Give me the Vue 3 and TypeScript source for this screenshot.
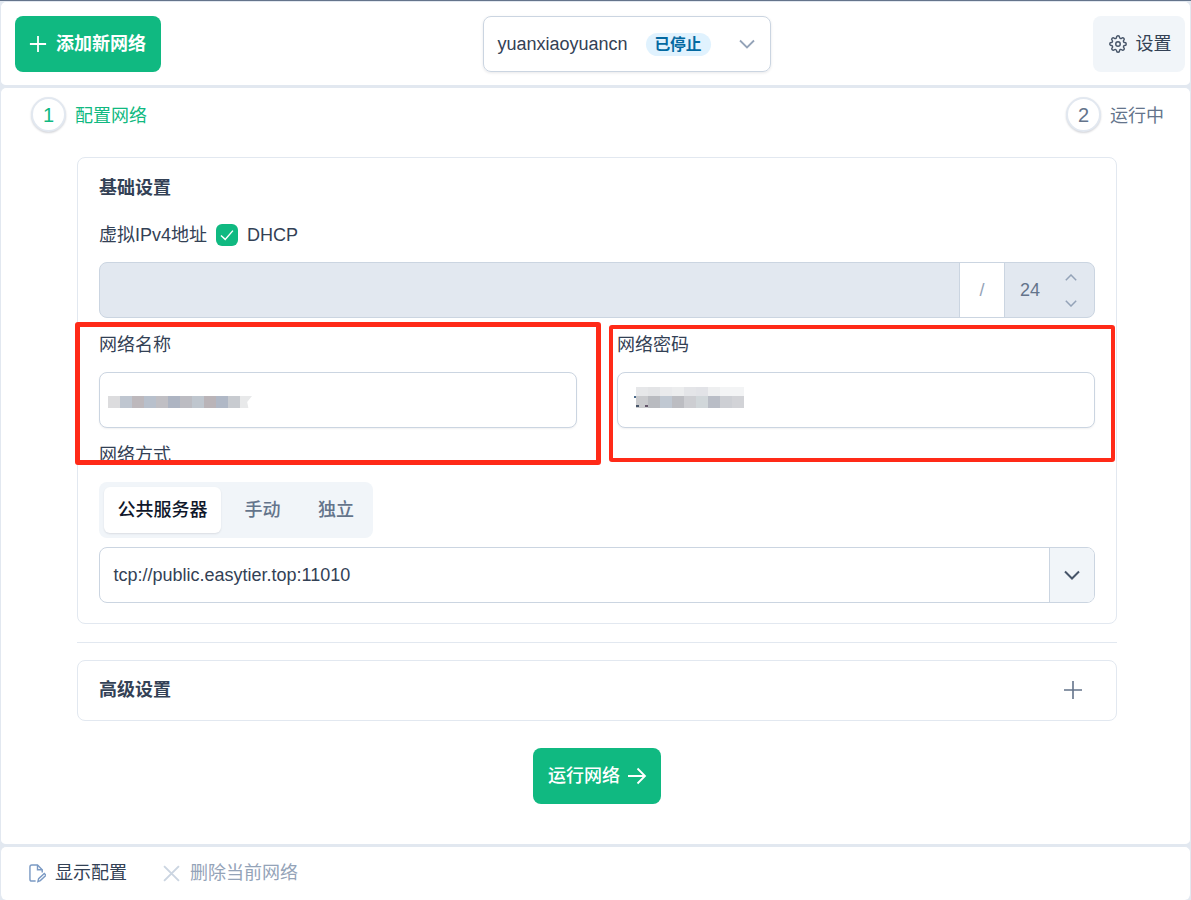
<script setup lang="ts">
const nameBlur: string[] = ['#dcdcde','#bfc6d0','#bdb8bc','#b8c0cc','#c0bfc4','#adb4c2','#bcbcc2','#bfc6ce','#bab4b8','#b0b8c6','#c8cbd0','#e8e9ea']
const pwTop: string[] = ['#e6e7e9','#e3e4e6','#e9eaec','#ecedee','#e4e5e8','#e2e3e7','#eeeff0','#f3f4f5','#f3f4f5']
const pwBottom: string[] = ['#c9cacd','#b9bbc0','#c0c8d2','#bcbdc2','#cdced2','#d1d7da','#b9bdc6','#cdcfd4','#d2d3d7']
</script>

<template>
  <div class="page">
    <header class="panel topbar">
      <button class="btn btn-green add">
        <svg class="ic20" viewBox="0 0 20 20"><path d="M10 1v18M1 10h18" /></svg>
        <span>添加新网络</span>
      </button>
      <div class="net-select">
        <span class="net-name">yuanxiaoyuancn</span>
        <span class="tag">已停止</span>
        <svg class="chev" viewBox="0 0 16 10"><path d="M1 1.500 8 8.500l7-7" /></svg>
      </div>
      <button class="settings">
        <svg class="gear" viewBox="0 0 24 24">
          <circle cx="12" cy="12" r="3" />
          <path d="M19.4 15a1.65 1.65 0 0 0 .33 1.82l.06.06a2 2 0 1 1-2.83 2.83l-.06-.06a1.65 1.65 0 0 0-1.82-.33 1.65 1.65 0 0 0-1 1.51V21a2 2 0 0 1-4 0v-.09A1.65 1.65 0 0 0 9 19.4a1.65 1.65 0 0 0-1.82.33l-.06.06a2 2 0 1 1-2.83-2.83l.06-.06a1.65 1.65 0 0 0 .33-1.82 1.65 1.65 0 0 0-1.51-1H3a2 2 0 0 1 0-4h.09A1.65 1.65 0 0 0 4.6 9a1.65 1.65 0 0 0-.33-1.82l-.06-.06a2 2 0 1 1 2.83-2.83l.06.06a1.65 1.65 0 0 0 1.82.33H9a1.65 1.65 0 0 0 1-1.51V3a2 2 0 0 1 4 0v.09a1.65 1.65 0 0 0 1 1.51 1.65 1.65 0 0 0 1.82-.33l.06-.06a2 2 0 1 1 2.83 2.83l-.06.06a1.65 1.65 0 0 0-.33 1.82V9a1.65 1.65 0 0 0 1.51 1H21a2 2 0 0 1 0 4h-.09a1.65 1.65 0 0 0-1.51 1z" />
        </svg>
        <span>设置</span>
      </button>
    </header>

    <main class="panel main">
      <div class="stepper">
        <div class="step">
          <span class="circle active">1</span>
          <span class="step-label active">配置网络</span>
        </div>
        <div class="step">
          <span class="circle">2</span>
          <span class="step-label">运行中</span>
        </div>
      </div>

      <div class="content">
        <section class="card basic">
          <h3 class="card-title">基础设置</h3>
          <div class="ip-row">
            <span>虚拟IPv4地址</span>
            <span class="check">
              <svg viewBox="0 0 14 14"><path d="M2.300 7.400 5.600 10.400l6-6.800" /></svg>
            </span>
            <span>DHCP</span>
          </div>
          <div class="ip-group">
            <div class="ip-main"></div>
            <div class="ip-slash">/</div>
            <div class="ip-mask">
              <span>24</span>
              <span class="spin">
                <svg viewBox="0 0 12 7"><path d="M.8 6.200 6 1l5.200 5.200" /></svg>
                <svg viewBox="0 0 12 7"><path d="M.8.8 6 6 11.200.8" /></svg>
              </span>
            </div>
          </div>
          <div class="two-col">
            <div class="field">
              <label>网络名称</label>
              <div class="input">
                <div class="blur blur-name">
                  <i v-for="(c, i) in nameBlur" :key="i" :style="{ background: c }"></i>
                </div>
              </div>
            </div>
            <div class="field">
              <label>网络密码</label>
              <div class="input">
                <div class="blur-pw">
                  <div class="blur pw-top"><i v-for="(c, i) in pwTop" :key="i" :style="{ background: c }"></i></div>
                  <div class="blur"><i v-for="(c, i) in pwBottom" :key="i" :style="{ background: c }"></i></div>
                </div>
              </div>
            </div>
          </div>
          <label class="mode-label">网络方式</label>
          <div class="segmented">
            <span class="seg on">公共服务器</span>
            <span class="seg">手动</span>
            <span class="seg">独立</span>
          </div>
          <div class="server">
            <span class="server-text">tcp://public.easytier.top:11010</span>
            <span class="server-drop">
              <svg viewBox="0 0 16 10"><path d="M1 1.500 8 8.500l7-7" /></svg>
            </span>
          </div>
        </section>

        <div class="divider"></div>

        <section class="card advanced">
          <h3 class="card-title">高级设置</h3>
          <svg class="adv-plus" viewBox="0 0 20 20"><path d="M10 1v18M1 10h18" /></svg>
        </section>

        <div class="run-wrap">
          <button class="btn btn-green run">
            <span>运行网络</span>
            <svg class="arrow" viewBox="0 0 20 18"><path d="M1 9h17M10.500 1.500 18 9l-7.500 7.500" /></svg>
          </button>
        </div>
      </div>
    </main>

    <footer class="panel footer">
      <span class="foot-item">
        <svg class="file" viewBox="0 0 18 20">
          <path d="M7 18H3a2 2 0 0 1-2-2V3a2 2 0 0 1 2-2h6l5 5v3" />
          <path d="M9 1v5h5" />
          <path d="M9.500 18.500l.7-3 6-5.500 1.800 2-6 5.500z" />
        </svg>
        <span>显示配置</span>
      </span>
      <span class="foot-item muted">
        <svg class="times" viewBox="0 0 16 16"><path d="M1 1l14 14M15 1 1 15" /></svg>
        <span>删除当前网络</span>
      </span>
    </footer>

    <div class="mark mark-a"></div>
    <div class="mark mark-b"></div>
  </div>
</template>

<style>
html, body { margin: 0; background: #fff; }
</style>

<style scoped>
* { box-sizing: border-box; }
.page {
  position: relative;
  width: 1191px;
  height: 900px;
  overflow: hidden;
  display: flex;
  flex-direction: column;
  background: #e2e8f0;
  border-top: 1px solid #64748b;
  font-family: "Liberation Sans", "Noto Sans CJK SC", sans-serif;
  font-size: 18px;
  line-height: 24px;
  color: #334155;
}
.panel {
  background: #fff;
  border: 1px solid #e2e8f0;
  border-radius: 6px;
}
.topbar {
  height: 86px;
  flex: none;
  padding: 14px 5px 0 14px;
  display: flex;
  align-items: flex-start;
  justify-content: space-between;
  border-bottom-width: 2px;
}
.btn {
  font: inherit;
  border: 0;
  display: flex;
  align-items: center;
  height: 56px;
  border-radius: 8px;
  color: #fff;
  background: #10b981;
}
.add {
  width: 146px;
  padding: 0 14px;
  gap: 9px;
  font-weight: 700;
}
.ic20 { width: 18px; height: 18px; flex: none; fill: none; stroke: #fff; stroke-width: 2; }
.net-select {
  width: 288px;
  height: 56px;
  margin-left: -1px;
  border: 1px solid #cbd5e1;
  border-radius: 8px;
  box-shadow: 0 1px 3px rgba(15, 23, 42, .1);
  display: flex;
  align-items: center;
  padding: 0 15px 0 14px;
}
.net-name { width: 130px; white-space: nowrap; }
.tag {
  margin-left: 18px;
  width: 65px;
  height: 23px;
  border-radius: 12px;
  background: #e0f2fe;
  color: #0369a1;
  font-size: 15.750px;
  font-weight: 700;
  line-height: 23px;
  text-align: center;
}
.chev { margin-left: auto; width: 16px; height: 10px; fill: none; stroke: #94a3b8; stroke-width: 1.800; }
.settings {
  font: inherit;
  color: #334155;
  border: 0;
  width: 92px;
  height: 56px;
  padding: 0 0 0 2px;
  border-radius: 8px;
  background: #f1f5f9;
  display: flex;
  align-items: center;
  justify-content: center;
  gap: 9px;
}
.gear { width: 18px; height: 18px; flex: none; fill: none; stroke: #475569; stroke-width: 1.900; }
.main {
  flex: none;
  height: 759px;
  border-bottom-width: 2px;
}
.stepper {
  display: flex;
  justify-content: space-between;
  padding: 9px 26px 0 30px;
  height: 69px;
}
.step { display: flex; align-items: flex-start; gap: 9px; }
.circle {
  width: 35px;
  height: 35px;
  border-radius: 50%;
  border: 2px solid #e2e8f0;
  box-shadow: 0 1px 2px rgba(15, 23, 42, .18);
  background: #fff;
  display: flex;
  align-items: center;
  justify-content: center;
  font-size: 20px;
  color: #64748b;
}
.circle.active { color: #10b981; }
.step-label { color: #64748b; line-height: 35px; padding-top: 2px; }
.step-label.active { color: #10b981; }
.content { padding: 0 73px 0 76px; }
.card {
  border: 1px solid #e2e8f0;
  border-radius: 8px;
  background: #fff;
}
.basic { height: 467px; padding: 18px 21px 0; }
.card-title {
  margin: 0;
  font-size: 18px;
  font-weight: 700;
  line-height: 24px;
  color: #334155;
}
.ip-row {
  margin-top: 23px;
  height: 24px;
  display: flex;
  align-items: center;
  gap: 9px;
}
.check {
  width: 22px;
  height: 22px;
  border-radius: 6px;
  background: #10b981;
  display: flex;
  align-items: center;
  justify-content: center;
}
.check svg { width: 18px; height: 18px; fill: none; stroke: #fff; stroke-width: 1.100; }
.ip-group {
  margin-top: 15px;
  height: 56px;
  display: flex;
  border: 1px solid #cbd5e1;
  border-radius: 8px;
  overflow: hidden;
  background: #e2e8f0;
}
.ip-main { flex: 1; }
.ip-slash {
  width: 46px;
  background: #fff;
  border-left: 1px solid #cbd5e1;
  border-right: 1px solid #cbd5e1;
  display: flex;
  align-items: center;
  justify-content: center;
  color: #94a3b8;
}
.ip-mask {
  width: 89px;
  display: flex;
  align-items: center;
  padding-left: 15px;
  color: #64748b;
}
.spin {
  margin-left: 25px;
  display: flex;
  flex-direction: column;
  gap: 19px;
}
.spin svg { display: block; width: 12px; height: 7px; fill: none; stroke: #94a3b8; stroke-width: 1.500; }
.two-col {
  margin-top: 14px;
  display: grid;
  grid-template-columns: 1fr 1fr;
  gap: 40px;
}
.field label { display: block; height: 24px; line-height: 26px; }
.input {
  margin-top: 16px;
  height: 56px;
  border: 1px solid #cbd5e1;
  border-radius: 8px;
  box-shadow: 0 1px 2px rgba(15, 23, 42, .06);
  position: relative;
  background: #fff;
}
.blur { display: flex; }
.blur i { display: block; width: 12px; height: 12px; }
.blur-name { position: absolute; left: 8px; top: 23px; }
.blur-name i:last-child { clip-path: polygon(0 0, 100% 0, 60% 50%, 70% 100%, 0 100%); }
.blur-pw { position: absolute; left: 18px; top: 14px; }
.pw-top i { height: 9px; }
.blur-pw::before {
  content: "";
  position: absolute;
  left: -2px;
  top: 9px;
  width: 2px;
  height: 2px;
  background: #4a6a8a;
}
.blur-pw::after {
  content: "";
  position: absolute;
  left: 0;
  top: 18px;
  width: 3px;
  height: 2px;
  background: #475569;
  box-shadow: 9px 0 0 #64566a;
}
.mode-label { display: block; margin-top: 14px; height: 24px; line-height: 26px; }
.segmented {
  margin-top: 16px;
  width: 274px;
  height: 56px;
  background: #f1f5f9;
  border-radius: 8px;
  padding: 5px;
  display: flex;
  align-items: stretch;
  gap: 9.500px;
  color: #64748b;
  font-weight: 500;
}
.seg { display: flex; align-items: center; justify-content: center; width: 64px; flex: none; }
.seg.on {
  width: 117px;
  background: #fff;
  color: #0f172a;
  border-radius: 6px;
  box-shadow: 0 1px 2px rgba(15, 23, 42, .1);
}
.server {
  margin-top: 9px;
  height: 56px;
  border: 1px solid #cbd5e1;
  border-radius: 8px;
  display: flex;
  overflow: hidden;
}
.server-text { flex: 1; padding-left: 13.500px; line-height: 54px; }
.server-drop {
  width: 45px;
  background: #f1f5f9;
  border-left: 1px solid #cbd5e1;
  display: flex;
  align-items: center;
  justify-content: center;
}
.server-drop svg { width: 16px; height: 10px; fill: none; stroke: #475569; stroke-width: 2; }
.divider { margin-top: 18px; height: 1px; background: #e2e8f0; }
.advanced {
  margin-top: 17px;
  height: 61px;
  padding: 0 33px 2px 21px;
  display: flex;
  align-items: center;
  justify-content: space-between;
}
.adv-plus { width: 20px; height: 20px; fill: none; stroke: #64748b; stroke-width: 1.600; }
.run-wrap { margin-top: 27px; display: flex; justify-content: center; }
.run { width: 128px; padding: 0 14px 0 15px; gap: 7px; font-weight: 500; }
.arrow { width: 20px; height: 18px; flex: none; fill: none; stroke: #fff; stroke-width: 1.800; }
.footer {
  flex: 1;
  display: flex;
  align-items: center;
  padding: 0 0 1px 28px;
  gap: 36px;
  border-bottom: 0;
}
.foot-item { display: flex; align-items: center; gap: 9px; color: #334155; }
.foot-item.muted { color: #94a3b8; gap: 10px; }
.file { width: 17px; height: 19px; flex: none; fill: none; stroke: #7b9ac4; stroke-width: 1.500; }
.times { width: 17px; height: 17px; flex: none; fill: none; stroke: #cbd5e1; stroke-width: 1.800; }
.mark {
  position: absolute;
  border-style: solid;
  border-color: #ff2a18;
  border-radius: 3px;
  pointer-events: none;
}
.mark-a { left: 75px; top: 321px; width: 526px; height: 143px; border-width: 5px; }
.mark-b { left: 609px; top: 324px; width: 506px; height: 137px; border-width: 4.500px; }
</style>
